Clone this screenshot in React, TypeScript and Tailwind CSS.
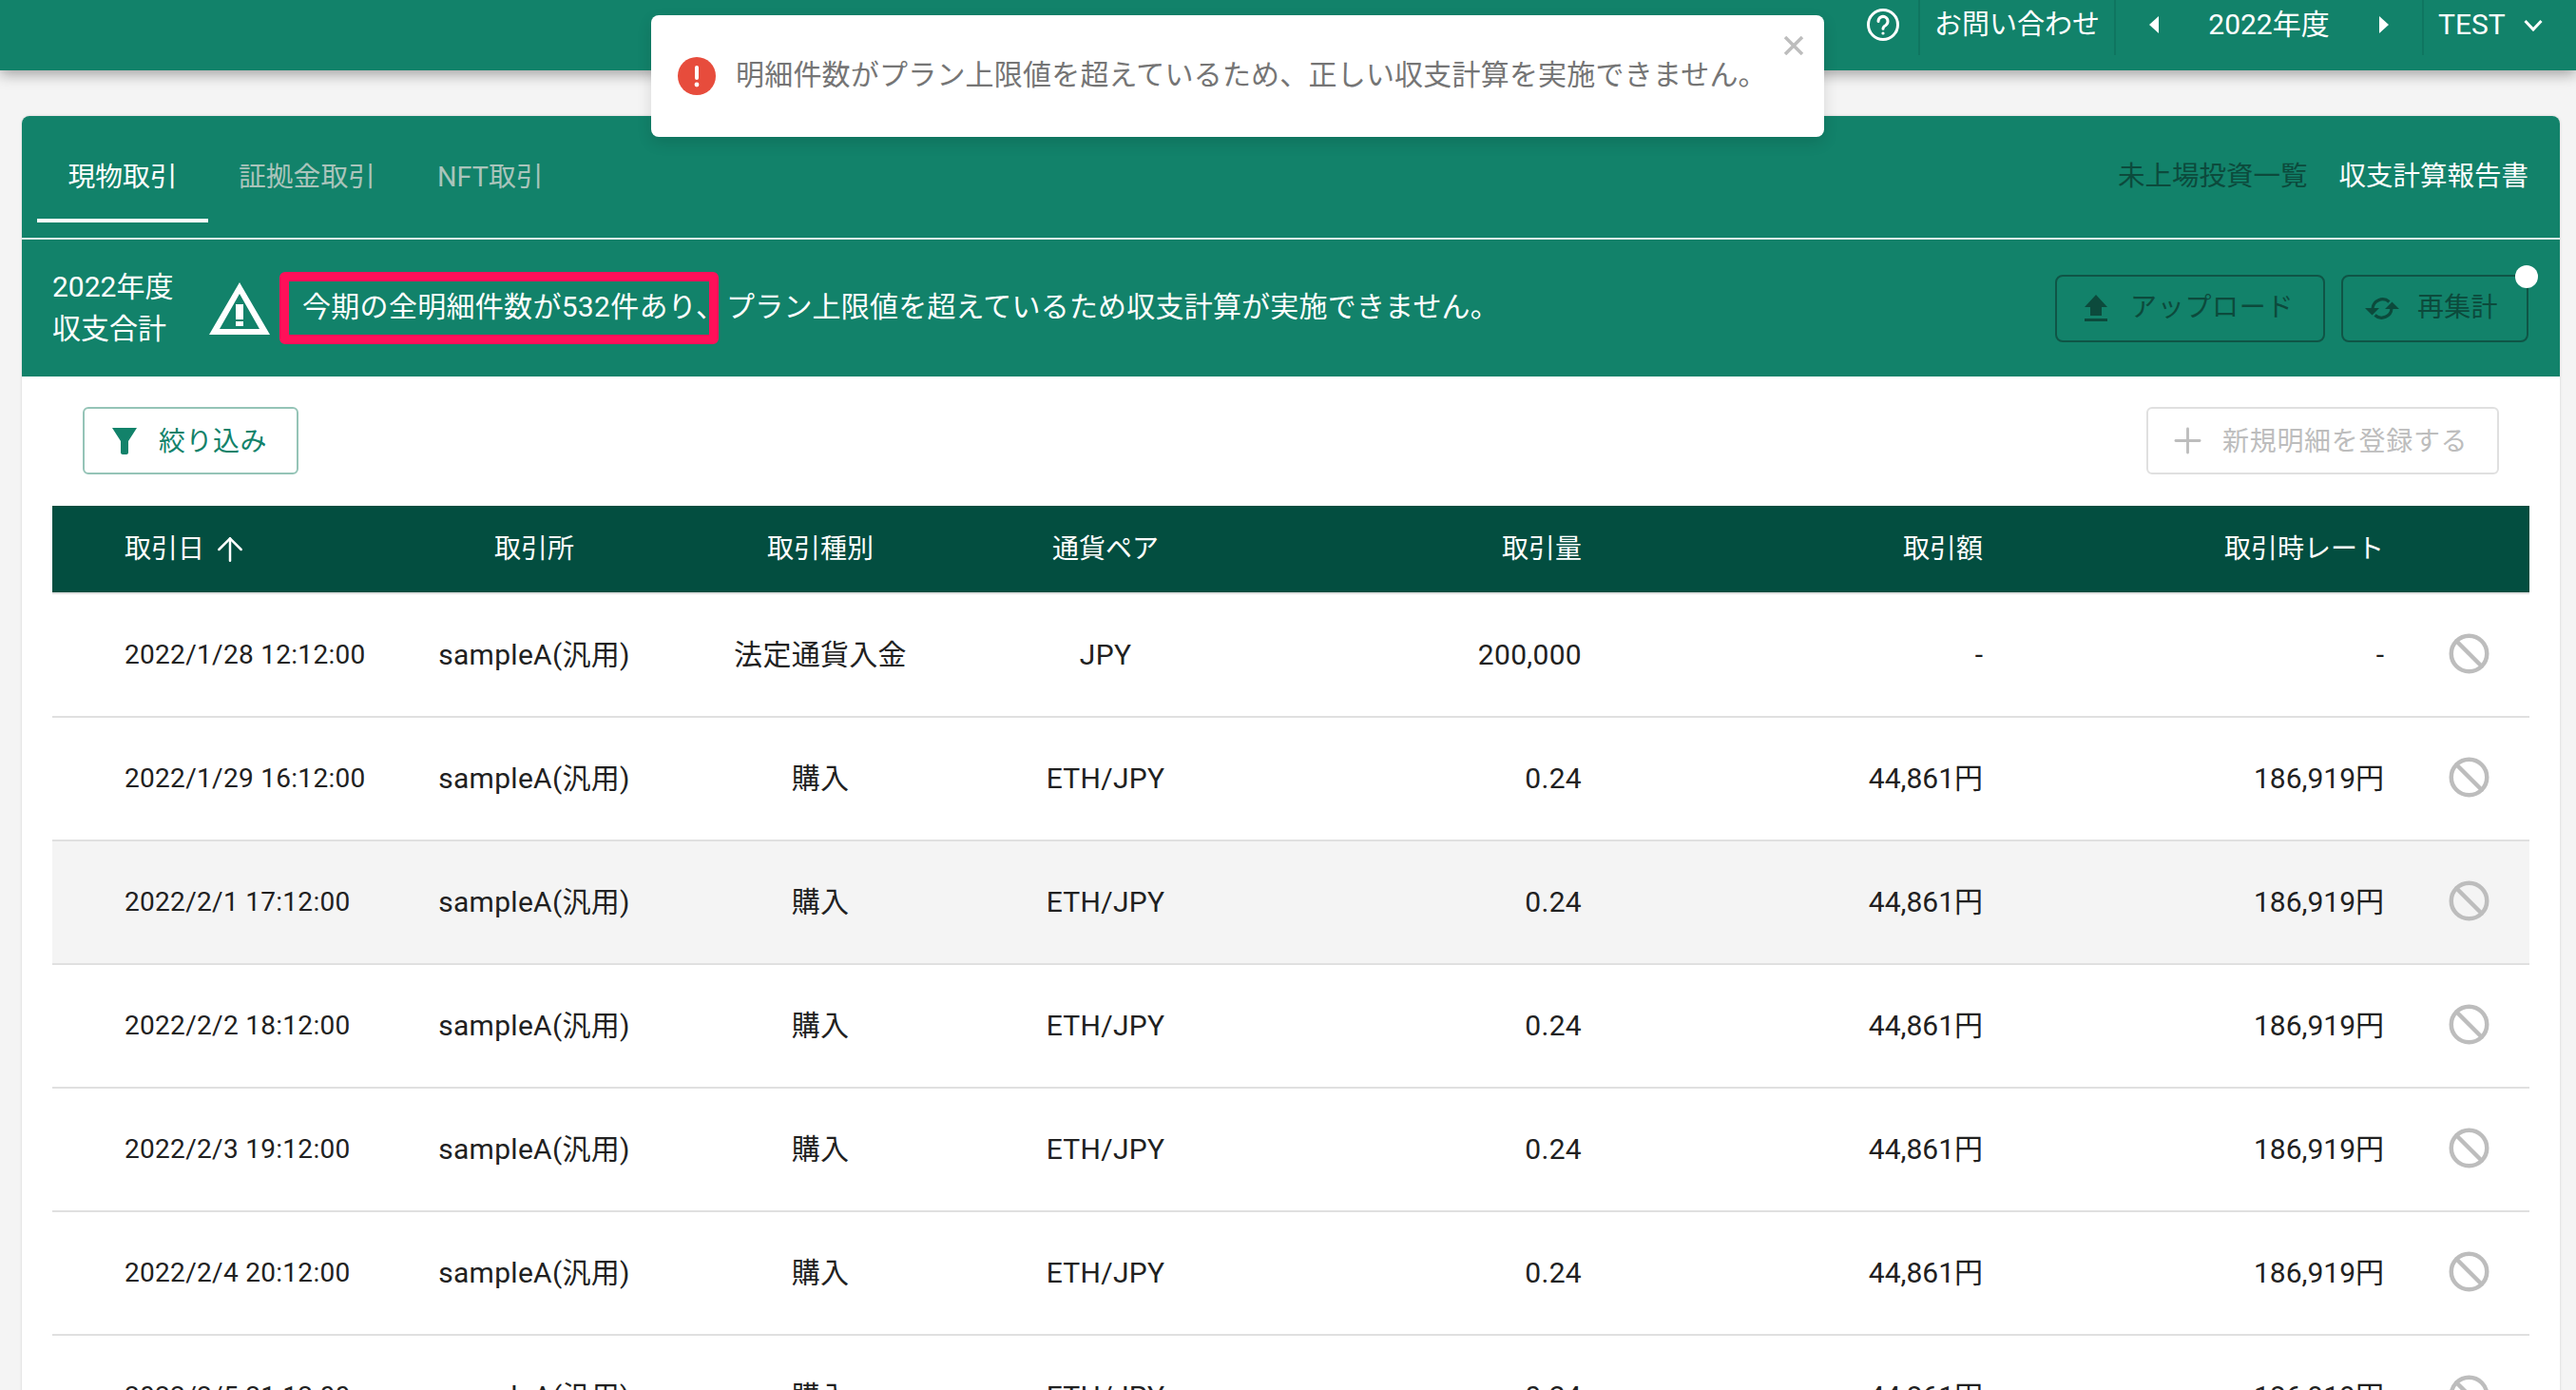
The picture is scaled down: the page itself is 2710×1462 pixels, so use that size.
import { ArrowUp, Ban, Plus } from "lucide-react";

const rows = [
  ["2022/1/28 12:12:00", "法定通貨入金", "JPY", "200,000", "-", "-"],
  ["2022/1/29 16:12:00", "購入", "ETH/JPY", "0.24", "44,861円", "186,919円"],
  ["2022/2/1 17:12:00", "購入", "ETH/JPY", "0.24", "44,861円", "186,919円"],
  ["2022/2/2 18:12:00", "購入", "ETH/JPY", "0.24", "44,861円", "186,919円"],
  ["2022/2/3 19:12:00", "購入", "ETH/JPY", "0.24", "44,861円", "186,919円"],
  ["2022/2/4 20:12:00", "購入", "ETH/JPY", "0.24", "44,861円", "186,919円"],
  ["2022/2/5 21:12:00", "購入", "ETH/JPY", "0.24", "44,861円", "186,919円"],
];

const cols = "grid grid-cols-[387px_240px_362px_238px_382px_422px_422px_153px] items-center";

const App = () => {
  return (
    <div className="relative h-[1462px] overflow-hidden bg-[#f4f4f4] font-['Roboto','Noto_Sans_CJK_JP',sans-serif] text-[28px] leading-[40px] text-[#212121]">
      {/* Header */}
      <header className="flex h-[74px] justify-end bg-[#12826a] pr-[30px] text-white shadow-[0_4px_14px_rgba(0,0,0,0.35)]">
        <div className="flex h-[58px] items-center">
          <div className="flex h-full w-[74px] items-center justify-center pb-[6px]">
            <svg viewBox="0 0 34 34" className="h-[34px] w-[34px]" fill="none" stroke="currentColor" strokeWidth="3">
              <circle cx="17" cy="17" r="15.5" />
              <path d="M12 13.5a5 5 0 1 1 7.6 4.2c-1.8 1-2.6 1.8-2.6 3.6" strokeLinecap="round" />
              <circle cx="17" cy="26" r="1.6" fill="currentColor" stroke="none" />
            </svg>
          </div>
          <div className="flex h-full w-[206px] items-center justify-center border-l-2 border-[#0f7560] pb-[6px] text-[29px]">
            お問い合わせ
          </div>
          <div className="flex h-full w-[324px] items-center justify-between border-l-2 border-[#0f7560] pb-[6px] pl-[35px] pr-[35px] text-[30px]">
            <span className="h-0 w-0 border-y-[9px] border-r-[10px] border-y-transparent border-r-white" />
            <span>2022年度</span>
            <span className="h-0 w-0 border-y-[9px] border-l-[10px] border-y-transparent border-l-white" />
          </div>
          <div className="flex h-full w-[132px] items-center gap-[19px] border-l-2 border-[#0f7560] pb-[6px] pl-[15px] text-[30px]">
            TEST
            <svg viewBox="0 0 20 13" className="h-[13px] w-[20px]" fill="none" stroke="currentColor" strokeWidth="3">
              <path d="M1.5 2L10 11L18.5 2" />
            </svg>
          </div>
        </div>
      </header>

      {/* Toast */}
      <div className="absolute left-[685px] top-[16px] z-10 flex h-[128px] w-[1234px] items-center rounded-[8px] bg-white pl-[28px] text-[30px] text-[#757575] shadow-[0_6px_16px_rgba(0,0,0,0.12)]">
        <svg viewBox="0 0 40 40" className="mr-[21px] h-[40px] w-[40px] shrink-0">
          <circle cx="20" cy="20" r="20" fill="#e74c3c" />
          <rect x="18" y="9" width="4" height="15" rx="2" fill="#fff" />
          <circle cx="20" cy="29" r="2.4" fill="#fff" />
        </svg>
        <span className="-translate-y-px tracking-[0.2px]">明細件数がプラン上限値を超えているため、正しい収支計算を実施できません。</span>
        <svg viewBox="0 0 22 20" className="absolute right-[21px] top-[22px] h-[20px] w-[22px]" stroke="#bdbdbd" strokeWidth="3.5">
          <path d="M2 1l18 18M20 1L2 19" />
        </svg>
      </div>

      {/* Card */}
      <main className="ml-[23px] mr-[17px] mt-[48px] rounded-t-[8px] bg-white shadow-[0_0_3px_rgba(0,0,0,0.15)]">
        <div className="flex h-[128px] items-center justify-between rounded-t-[8px] bg-[#12826a] pr-[33px] text-[28.8px]">
          <div className="flex h-full items-center">
            <div className="relative ml-[16px] flex h-full w-[180px] items-center justify-center text-white">
              現物取引
              <span className="absolute bottom-[16px] left-0 h-[4px] w-full bg-white" />
            </div>
            <span className="ml-[32px] text-[#a9c4bb]">証拠金取引</span>
            <span className="ml-[65px] text-[#a9c4bb]">NFT取引</span>
          </div>
          <div className="flex gap-[33px] text-[28.5px]">
            <span className="text-[#0c4a3c]">未上場投資一覧</span>
            <span className="text-white">収支計算報告書</span>
          </div>
        </div>

        <div className="relative flex h-[146px] items-center justify-between border-t-2 border-[#e4ece9] bg-[#12826a] pr-[33px]">
          <div className="flex items-center text-[30px] text-white">
            <div className="ml-[32px] w-[165px] leading-[44px]">
              <div>2022年度</div>
              <div>収支合計</div>
            </div>
            <svg viewBox="0 0 64 55" className="h-[55px] w-[64px] shrink-0">
              <path d="M32 0L64 55H0ZM32 12L11 49H53Z" fill="#fff" fillRule="evenodd" />
              <rect x="28" y="23" width="8" height="16" fill="#fff" />
              <rect x="28" y="41" width="8" height="5" fill="#fff" />
            </svg>
            <div className="ml-[10px] flex h-[76px] w-[462px] items-center rounded-[6px] border-[10px] border-[#ff1059] pl-[14px]">
              <span className="-translate-y-px whitespace-nowrap tracking-[0.3px]">今期の全明細件数が532件あり、</span>
            </div>
            <span className="ml-[8px] -translate-y-px whitespace-nowrap tracking-[0.2px]">プラン上限値を超えているため収支計算が実施できません。</span>
          </div>
          <div className="flex gap-[17px] text-[#0c4a3c]">
            <button className="flex h-[71px] w-[284px] items-center rounded-[8px] border-2 border-[#0f5546] pl-[29px]">
              <svg viewBox="0 0 24 28" className="mr-[24px] h-[28px] w-[24px]" fill="currentColor">
                <path d="M12 0L24 13H18V22H6V13H0Z" />
                <rect y="25" width="24" height="3.5" />
              </svg>
              <span className="tracking-[0.7px]">アップロード</span>
            </button>
            <button className="relative flex h-[71px] w-[197px] items-center rounded-[8px] border-2 border-[#0f5546] pl-[23px]">
              <svg viewBox="0 0 36 27" className="mr-[19px] h-[27px] w-[36px]" fill="none" stroke="currentColor" strokeWidth="3.2">
                <path d="M8 14A10.5 10.5 0 0 1 25.5 6.5" />
                <path d="M28 13A10.5 10.5 0 0 1 10.5 20.5" />
                <path d="M0 13h15l-7.5 7.5zM21 14h15l-7.5-7.5z" fill="currentColor" stroke="none" />
              </svg>
              <span className="tracking-[0.3px]">再集計</span>
              <span className="absolute -right-[12px] -top-[12px] h-[24px] w-[24px] rounded-full bg-white" />
            </button>
          </div>
        </div>

        <div className="px-[32px] pt-[32px]">
          <div className="flex justify-between px-[32px]">
            <button className="flex h-[71px] w-[227px] items-center rounded-[6px] border-2 border-[#95c4b7] pl-[28px] text-[#12826a]">
              <svg viewBox="0 0 28 28" className="mr-[22px] h-[28px] w-[28px]" fill="currentColor">
                <path d="M1 0H27L18 14V26c0 1-1 2-2 2h-4c-1 0-2-1-2-2V14Z" />
              </svg>
              <span className="translate-y-px tracking-[0.5px]">絞り込み</span>
            </button>
            <button className="flex h-[71px] w-[371px] items-center rounded-[6px] border-2 border-[#e0e0e0] pl-[20px] text-[#bdbdbd]">
              <Plus className="mr-[15px] h-[43px] w-[43px]" strokeWidth={1.6} />
              <span className="translate-y-px tracking-[0.7px]">新規明細を登録する</span>
            </button>
          </div>

          {/* Table */}
          <div className="mt-[33px]">
            <div className={`${cols} h-[91px] bg-[#034e40] text-white`}>
              <div className="flex items-center gap-[7px] pl-[76px]">
                取引日
                <ArrowUp className="h-[40px] w-[40px]" strokeWidth={1.5} />
              </div>
              <div className="text-center">取引所</div>
              <div className="text-center">取引種別</div>
              <div className="text-center">通貨ペア</div>
              <div className="text-right">取引量</div>
              <div className="text-right">取引額</div>
              <div className="text-right">取引時レート</div>
              <div />
            </div>
            {rows.map((row, index) => (
              <div
                key={index}
                className={`${cols} h-[130px] border-t-2 border-[#e0e0e0] text-[30px] tracking-[0.3px] ${index === 2 ? "bg-[#f4f4f4]" : ""}`}
              >
                <div className="pl-[76px] text-[28px]">{row[0]}</div>
                <div className="text-center">sampleA(汎用)</div>
                <div className="text-center">{row[1]}</div>
                <div className="text-center">{row[2]}</div>
                <div className="text-right">{row[3]}</div>
                <div className="text-right tracking-normal">{row[4]}</div>
                <div className="text-right tracking-normal">{row[5]}</div>
                <div className="pl-[69px]">
                  <Ban className="h-[45px] w-[45px] -translate-x-[2px] -translate-y-[2px] text-[#bdbdbd]" strokeWidth={2.4} />
                </div>
              </div>
            ))}
          </div>
        </div>
      </main>
    </div>
  );
};

export default App;
